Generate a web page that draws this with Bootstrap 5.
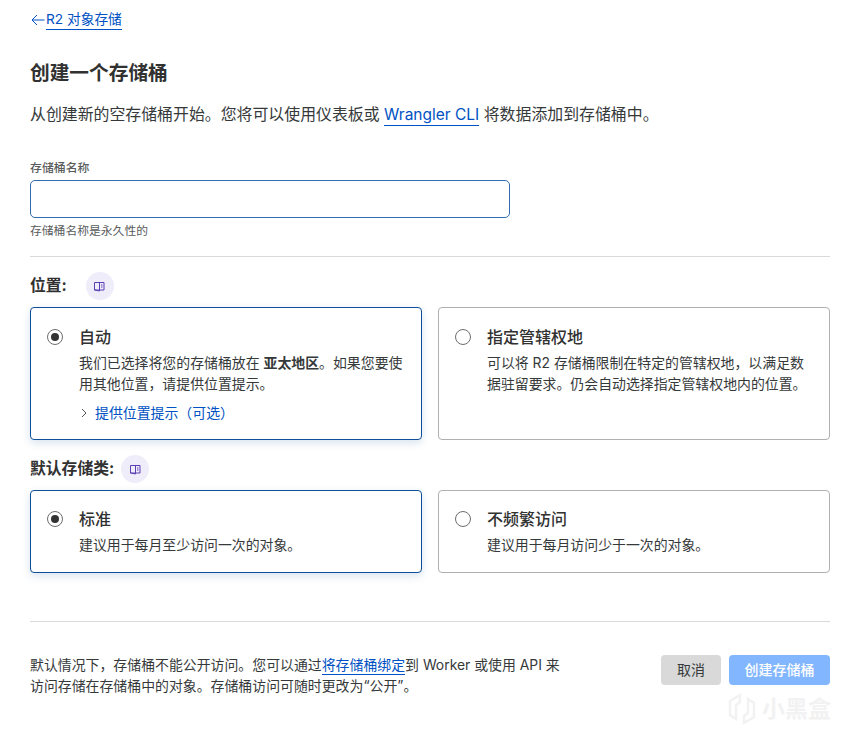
<!DOCTYPE html>
<html lang="zh-CN">
<head>
<meta charset="utf-8">
<title>创建存储桶</title>
<link href="https://cdn.jsdelivr.net/npm/bootstrap@5.3.0/dist/css/bootstrap.min.css" rel="stylesheet">
<style>
html,body{height:744px;overflow:hidden;}
body{font-family:Inter,"Noto Sans CJK SC",sans-serif;color:#36393a;background:#fff;}
.shell{position:relative;height:744px;padding:10px 26px 0 30px;}
.back-row{height:19px;font-size:13.7px;line-height:19px;color:#0051c3;}
.ul-link{color:#0051c3;text-decoration:none;border-bottom:1px solid #0051c3;}
.page-title{font-size:19.7px;font-weight:700;line-height:28px;margin:30px 0 0;color:#313131;}
.intro{font-size:15.9px;line-height:22px;margin:17px 0 0;color:#36393a;}
.intro .ul-link{padding-bottom:1px;font-size:15.5px;}
.f-label{font-size:11.9px;font-weight:500;line-height:16px;margin:34px 0 0;color:#595b5c;display:block;}
.f-input{width:480px;height:38px;margin-top:4px;border:1px solid #2f6cb0;border-radius:5px;box-shadow:none;}
.f-hint{font-size:11.8px;line-height:16px;margin-top:5px;color:#595b5c;}
.rule{margin:0;border:0;border-top:1px solid #d9d9d9;opacity:1;}
.rule-top{margin-top:17px;}
.rule-foot{margin-top:48px;}
.sec-head{font-size:15.8px;font-weight:700;line-height:28px;color:#313131;}
.sec-first{margin-top:15px;}
.sec-second{margin-top:15px;}
.tip-dot{width:28px;height:28px;border-radius:50%;background:#f0edfa;}
.tip-a{margin-left:19px;}
.tip-b{margin-left:7px;}
.pick-grid{display:grid;grid-template-columns:392px 392px;gap:16px;margin-top:7px;}
.pick{border:1px solid #b0b0b0;border-radius:4px;background:#fff;padding:17px 14px 0 16px;gap:16px;}
.pick.tall{height:133px;}
.pick.short{height:83px;padding-top:16px;}
.pick.on{border-color:#0d4f98;box-shadow:0 3px 8px rgba(13,79,152,.16);}
.radio-ring{width:16px;height:16px;margin-top:4px;flex:none;border:1px solid #6e6e6e;border-radius:50%;background:#fff;}
.radio-ring.sel::after{content:"";width:8px;height:8px;border-radius:50%;background:#333;}
.pick-title{font-size:16px;font-weight:500;line-height:24px;color:#313131;}
.pick-body{font-size:13.9px;line-height:21px;margin-top:4px;color:#36393a;}
.pick-link{font-size:13.9px;line-height:18px;margin-top:9px;color:#0051c3;gap:6px;}
.foot-row{margin-top:33px;}
.foot-text{font-size:13.9px;line-height:21px;width:535px;color:#36393a;}
.foot-text .ul-link{padding-bottom:1px;}
.btn-cancel,.btn-create{height:30px;font-size:14px;line-height:20px;border:0;border-radius:4px;padding:5px 0;}
.btn-cancel{width:60px;background:#d9d9d9;color:#36393a;}
.btn-create{width:101px;background:#82b6ff;color:#fff;font-weight:500;}
.wm{position:absolute;left:727px;top:692px;gap:5px;color:#f2f2f2;font-size:23px;font-weight:700;line-height:34px;}
</style>
</head>
<body>
<main class="shell">
  <div class="back-row d-flex align-items-center">
    <svg width="16" height="14" viewBox="0 0 16 14" fill="none" stroke="#0051c3" stroke-width="1" aria-hidden="true"><path d="M14.5 7H2M7 2 2 7l5 5"/></svg>
    <a class="ul-link" href="#">R2 对象存储</a>
  </div>
  <h1 class="page-title">创建一个存储桶</h1>
  <p class="intro">从创建新的空存储桶开始。您将可以使用仪表板或 <a class="ul-link" href="#">Wrangler CLI</a> 将数据添加到存储桶中。</p>
  <label class="f-label" for="bn">存储桶名称</label>
  <input id="bn" class="form-control f-input" type="text">
  <div class="f-hint">存储桶名称是永久性的</div>
  <hr class="rule rule-top">
  <div class="sec-head sec-first d-flex align-items-center">
    <span>位置:</span>
    <span class="tip-dot tip-a d-flex align-items-center justify-content-center">
      <svg width="11" height="11" viewBox="0 0 11 11" fill="none" stroke="#5a3fb5" stroke-width="1" aria-hidden="true"><path d="M.5 1.5h9.5v7.5H.5zM5.5 1.5v8.5l-5-1"/><path d="M7 4h1.5M7 6h1.5"/></svg>
    </span>
  </div>
  <div class="pick-grid">
    <div class="pick tall on d-flex">
      <span class="radio-ring sel d-flex align-items-center justify-content-center"></span>
      <div>
        <div class="pick-title">自动</div>
        <div class="pick-body">我们已选择将您的存储桶放在 <b>亚太地区</b>。如果您要使用其他位置，请提供位置提示。</div>
        <div class="pick-link d-flex align-items-center">
          <svg width="10" height="10" viewBox="0 0 10 10" fill="none" stroke="#555" stroke-width="1" aria-hidden="true"><path d="m3 1 4 4-4 4"/></svg>
          <span>提供位置提示（可选）</span>
        </div>
      </div>
    </div>
    <div class="pick tall d-flex">
      <span class="radio-ring"></span>
      <div>
        <div class="pick-title">指定管辖权地</div>
        <div class="pick-body">可以将 R2 存储桶限制在特定的管辖权地，以满足数据驻留要求。仍会自动选择指定管辖权地内的位置。</div>
      </div>
    </div>
  </div>
  <div class="sec-head sec-second d-flex align-items-center">
    <span>默认存储类:</span>
    <span class="tip-dot tip-b d-flex align-items-center justify-content-center">
      <svg width="11" height="11" viewBox="0 0 11 11" fill="none" stroke="#5a3fb5" stroke-width="1" aria-hidden="true"><path d="M.5 1.5h9.5v7.5H.5zM5.5 1.5v8.5l-5-1"/><path d="M7 4h1.5M7 6h1.5"/></svg>
    </span>
  </div>
  <div class="pick-grid">
    <div class="pick short on d-flex">
      <span class="radio-ring sel d-flex align-items-center justify-content-center"></span>
      <div>
        <div class="pick-title">标准</div>
        <div class="pick-body">建议用于每月至少访问一次的对象。</div>
      </div>
    </div>
    <div class="pick short d-flex">
      <span class="radio-ring"></span>
      <div>
        <div class="pick-title">不频繁访问</div>
        <div class="pick-body">建议用于每月访问少于一次的对象。</div>
      </div>
    </div>
  </div>
  <hr class="rule rule-foot">
  <div class="foot-row d-flex justify-content-between align-items-start">
    <div class="foot-text">默认情况下，存储桶不能公开访问。您可以通过<a class="ul-link" href="#">将存储桶绑定</a>到 Worker 或使用 API 来访问存储在存储桶中的对象。存储桶访问可随时更改为“公开”。</div>
    <div class="d-flex gap-2">
      <button type="button" class="btn btn-cancel">取消</button>
      <button type="button" class="btn btn-create">创建存储桶</button>
    </div>
  </div>
  <div class="wm d-flex align-items-center">
    <svg width="30" height="34" viewBox="0 0 30 34" fill="none" stroke="#f2f2f2" stroke-width="2.5" aria-hidden="true"><path d="M13 3 3 9v14l6 4V13l4-3zM17 31l10-6V11l-6-4v14l-4 3z"/></svg>
    <span>小黑盒</span>
  </div>
</main>
<script src="https://cdn.jsdelivr.net/npm/bootstrap@5.3.0/dist/js/bootstrap.bundle.min.js"></script>
</body>
</html>
